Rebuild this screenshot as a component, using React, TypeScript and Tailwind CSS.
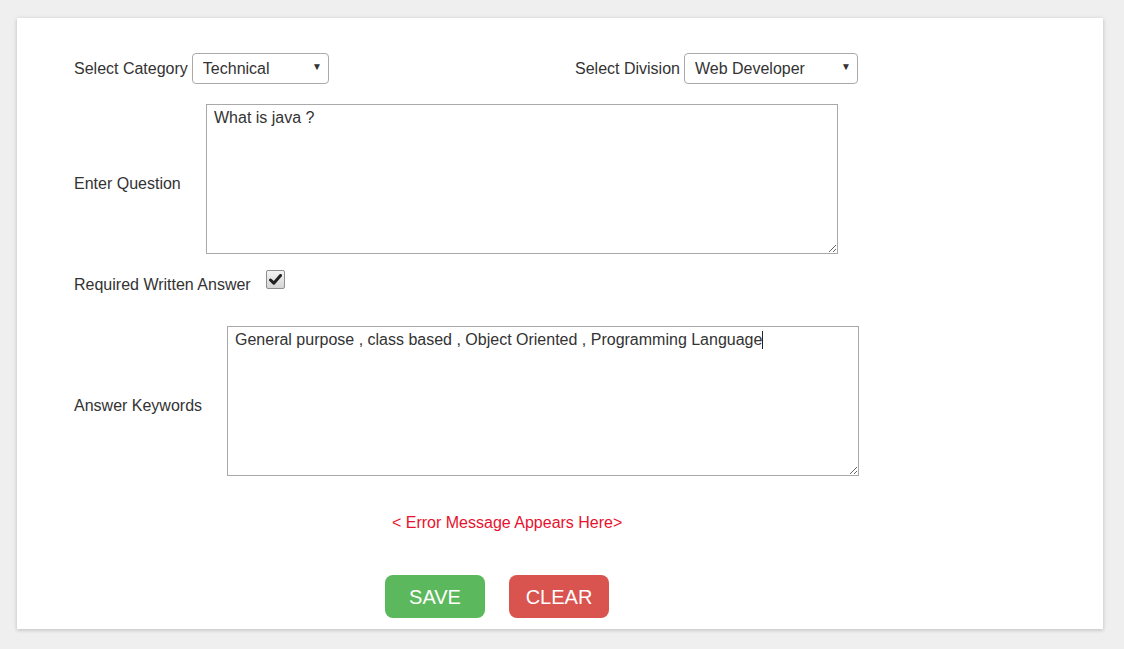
import React from "react";

function FakeSelect({ value, width }: { value: string; width: string }) {
  return (
    <div className={`relative ${width} h-[31px]`}>
      <select
        defaultValue={value}
        className="w-full h-full appearance-none rounded-[4px] border border-[#aaaaaa] bg-white pl-[10px] pr-6 text-[16px] text-[#333] outline-none"
      >
        <option>{value}</option>
      </select>
      <span className="pointer-events-none absolute right-[7px] top-[9px] text-[10px] leading-none text-[#333]">▼</span>
    </div>
  );
}

export default function App() {
  return (
    <div
      className="min-h-[649px] w-full bg-[#efefef] pt-[18px] pl-[17px]"
      style={{ fontFamily: '"Liberation Sans", Arial, sans-serif' }}
    >
      <div className="flex h-[611px] w-[1086px] flex-col bg-white pl-[57px] pt-[35px] text-[16px] text-[#333] shadow-[0_1px_4px_rgba(0,0,0,0.22)]">
        {/* Row 1 */}
        <div className="flex h-[31px] items-center">
          <div className="flex w-[501px] items-center">
            <span className="mr-[4px]">Select Category</span>
            <FakeSelect value="Technical" width="w-[137px]" />
          </div>
          <div className="flex items-center">
            <span className="mr-[4px]">Select Division</span>
            <FakeSelect value="Web Developer" width="w-[174px]" />
          </div>
        </div>

        {/* Row 2 */}
        <div className="mt-[20px] flex items-center">
          <span className="w-[132px] pt-[10px]">Enter Question</span>
          <textarea
            defaultValue="What is java ?"
            className="h-[150px] w-[632px] resize border border-[#a9a9a9] px-[7px] pt-[4px] text-[16px] leading-[18px] text-[#333] outline-none"
          />
        </div>

        {/* Row 3 */}
        <div className="mt-[16px] flex items-start">
          <span className="mt-[6px] leading-[18px]">Required Written Answer</span>
          <span className="ml-[15px] flex h-[19px] w-[19px] items-center justify-center rounded-[2px] border border-[#8f8f8f] bg-gradient-to-b from-[#f4f4f4] to-[#d4d4d4]">
            <svg width="13" height="11" viewBox="0 0 13 11">
              <path d="M1.5 6 L4.8 9.2 L11.5 1.5" fill="none" stroke="#222" strokeWidth="3" strokeLinecap="round" strokeLinejoin="round" />
            </svg>
          </span>
        </div>

        {/* Row 4 */}
        <div className="mt-[32px] flex items-center">
          <span className="w-[153px] pt-[10px]">Answer Keywords</span>
          <div className="relative">
            <textarea
              defaultValue="General purpose , class based , Object Oriented , Programming Language"
              className="block h-[150px] w-[632px] resize border border-[#a9a9a9] px-[7px] pt-[4px] text-[16px] leading-[18px] text-[#333] outline-none"
            />
            <span className="pointer-events-none absolute left-[535px] top-[5px] h-[18px] w-px bg-[#222]" />
          </div>
        </div>

        {/* Error */}
        <div className="mt-[38px] pl-[318px] text-[#e8112d] leading-[18px]">&lt; Error Message Appears Here&gt;</div>

        {/* Buttons */}
        <div className="mt-[43px] flex pl-[311px] gap-[24px]">
          <button className="h-[43px] w-[100px] rounded-[8px] bg-[#5cb85c] text-[20px] text-white">SAVE</button>
          <button className="h-[43px] w-[100px] rounded-[8px] bg-[#d9534f] text-[20px] text-white">CLEAR</button>
        </div>
      </div>
    </div>
  );
}
